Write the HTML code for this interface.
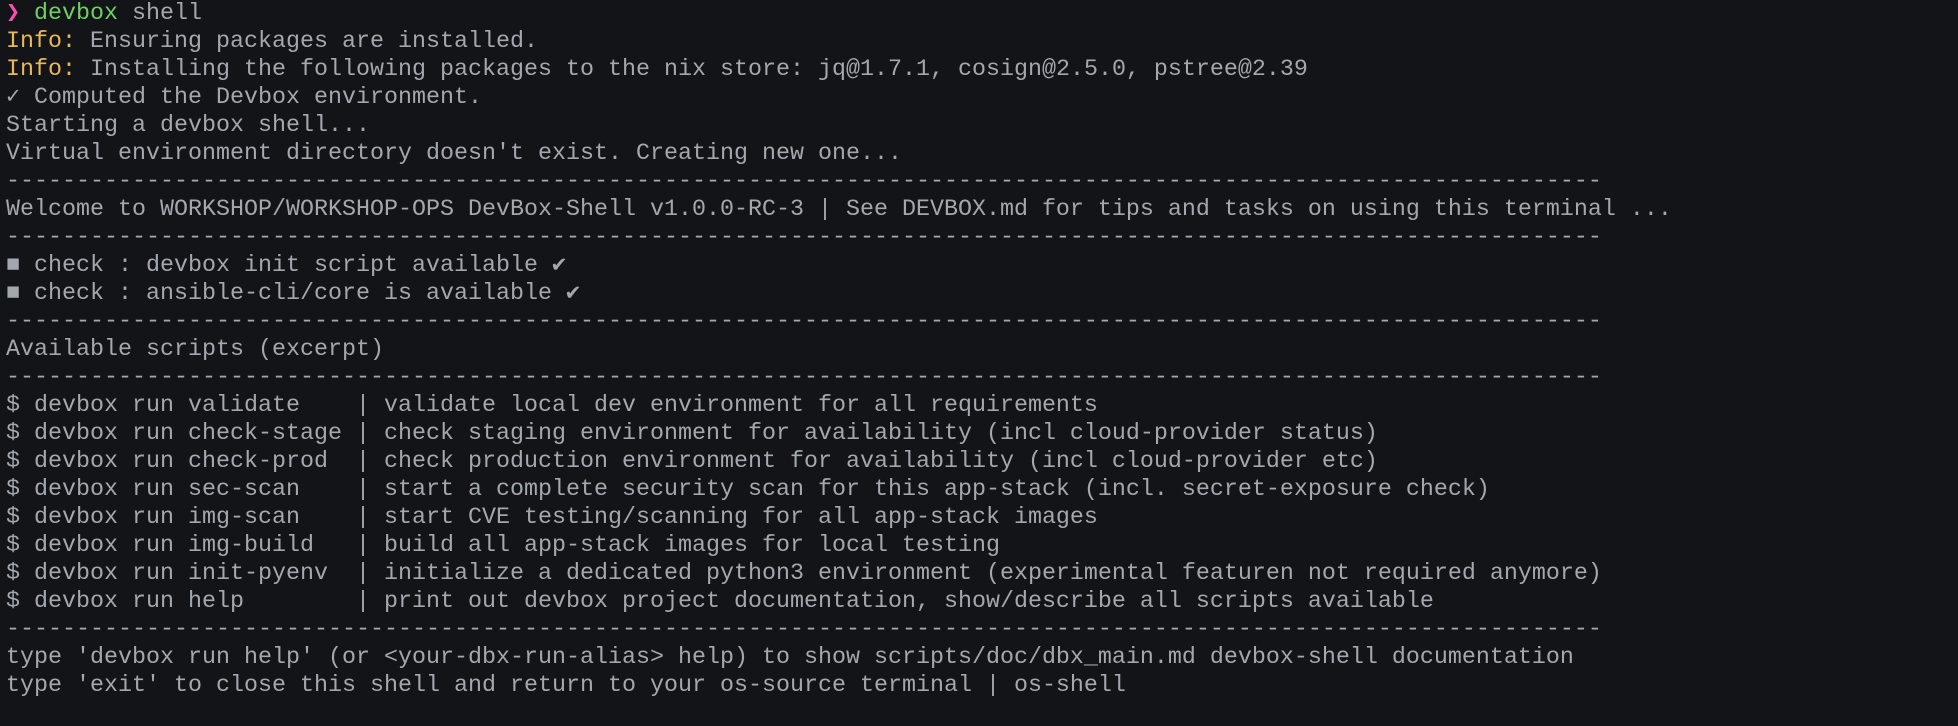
<!DOCTYPE html>
<html><head><meta charset="utf-8"><style>
html,body{margin:0;padding:0;background:#131418;width:1958px;height:726px;overflow:hidden}
pre{margin:0;padding:0 0 0 6px;font-family:"Liberation Mono","DejaVu Sans Mono",monospace;font-size:23.33px;line-height:28px;color:#a3a7ae;white-space:pre}
.g{color:#6fcf63}.p{color:#ff4fae}.y{color:#e8b85a}
</style></head><body><pre><span class="p">❯</span> <span class="g">devbox</span> shell
<span class="y">Info:</span> Ensuring packages are installed.
<span class="y">Info:</span> Installing the following packages to the nix store: jq@1.7.1, cosign@2.5.0, pstree@2.39
✓ Computed the Devbox environment.
Starting a devbox shell...
Virtual environment directory doesn't exist. Creating new one...
------------------------------------------------------------------------------------------------------------------
Welcome to WORKSHOP/WORKSHOP-OPS DevBox-Shell v1.0.0-RC-3 | See DEVBOX.md for tips and tasks on using this terminal ...
------------------------------------------------------------------------------------------------------------------
■ check : devbox init script available ✔
■ check : ansible-cli/core is available ✔
------------------------------------------------------------------------------------------------------------------
Available scripts (excerpt)
------------------------------------------------------------------------------------------------------------------
$ devbox run validate    | validate local dev environment for all requirements
$ devbox run check-stage | check staging environment for availability (incl cloud-provider status)
$ devbox run check-prod  | check production environment for availability (incl cloud-provider etc)
$ devbox run sec-scan    | start a complete security scan for this app-stack (incl. secret-exposure check)
$ devbox run img-scan    | start CVE testing/scanning for all app-stack images
$ devbox run img-build   | build all app-stack images for local testing
$ devbox run init-pyenv  | initialize a dedicated python3 environment (experimental featuren not required anymore)
$ devbox run help        | print out devbox project documentation, show/describe all scripts available
------------------------------------------------------------------------------------------------------------------
type 'devbox run help' (or &lt;your-dbx-run-alias&gt; help) to show scripts/doc/dbx_main.md devbox-shell documentation
type 'exit' to close this shell and return to your os-source terminal | os-shell</pre></body></html>
